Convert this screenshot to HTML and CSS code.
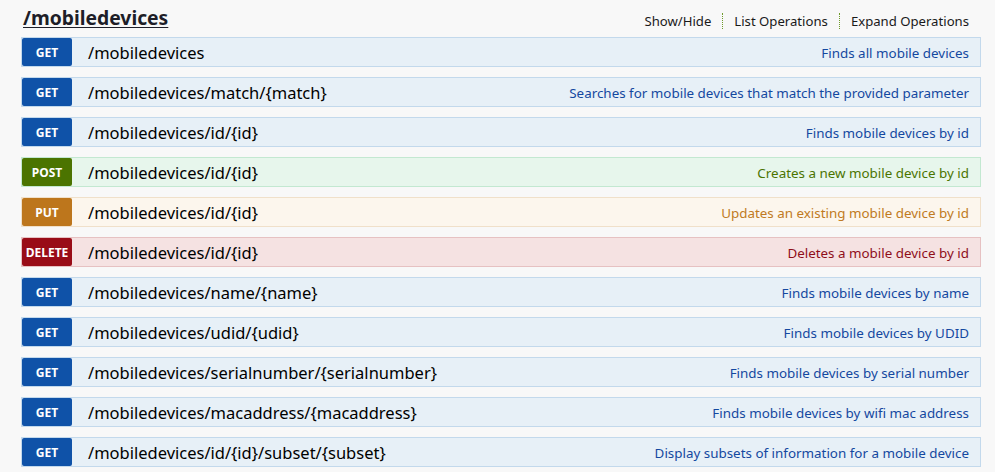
FILE: index.html
```html
<!DOCTYPE html>
<html>
<head>
<meta charset="utf-8">
<link rel="stylesheet" href="styles.css">
</head>
<body>
<div class="resource">
  <div class="heading">
    <h2 class="title"><a href="#">/mobiledevices</a></h2>
    <ul class="options">
      <li><a href="#">Show/Hide</a></li>
      <li><a href="#">List Operations</a></li>
      <li><a href="#">Expand Operations</a></li>
    </ul>
  </div>
  <ul class="ops">
    <li class="op get"><span class="method">GET</span><span class="path">/mobiledevices</span><span class="desc">Finds all mobile devices</span></li>
    <li class="op get"><span class="method">GET</span><span class="path">/mobiledevices/match/{match}</span><span class="desc">Searches for mobile devices that match the provided parameter</span></li>
    <li class="op get"><span class="method">GET</span><span class="path">/mobiledevices/id/{id}</span><span class="desc">Finds mobile devices by id</span></li>
    <li class="op post"><span class="method">POST</span><span class="path">/mobiledevices/id/{id}</span><span class="desc">Creates a new mobile device by id</span></li>
    <li class="op put"><span class="method">PUT</span><span class="path">/mobiledevices/id/{id}</span><span class="desc">Updates an existing mobile device by id</span></li>
    <li class="op delete"><span class="method">DELETE</span><span class="path">/mobiledevices/id/{id}</span><span class="desc">Deletes a mobile device by id</span></li>
    <li class="op get"><span class="method">GET</span><span class="path">/mobiledevices/name/{name}</span><span class="desc">Finds mobile devices by name</span></li>
    <li class="op get"><span class="method">GET</span><span class="path">/mobiledevices/udid/{udid}</span><span class="desc">Finds mobile devices by UDID</span></li>
    <li class="op get"><span class="method">GET</span><span class="path">/mobiledevices/serialnumber/{serialnumber}</span><span class="desc">Finds mobile devices by serial number</span></li>
    <li class="op get"><span class="method">GET</span><span class="path">/mobiledevices/macaddress/{macaddress}</span><span class="desc">Finds mobile devices by wifi mac address</span></li>
    <li class="op get"><span class="method">GET</span><span class="path">/mobiledevices/id/{id}/subset/{subset}</span><span class="desc">Display subsets of information for a mobile device</span></li>
  </ul>
</div>
</body>
</html>
```
FILE: styles.css
```css
html, body {
  margin: 0;
  padding: 0;
  background: #f8f8f8;
  font-family: "Noto Sans", "Open Sans", "DejaVu Sans", sans-serif;
  color: #000;
}
.resource {
  padding: 0 14px 0 21px;
}
.heading {
  display: flex;
  align-items: center;
  justify-content: space-between;
  height: 37px;
}
.title {
  margin: 0 0 0 2px;
  font-size: 19.3px;
  font-weight: bold;
  line-height: 24px;
  padding-bottom: 2px;
}
.title a {
  color: #1e1e28;
  text-decoration: underline;
  text-underline-offset: 2px;
}
.options {
  display: flex;
  list-style: none;
  margin: 0;
  padding: 4px 0 0 0;
}
.options li {
  padding: 0 11px;
  line-height: 16px;
  font-size: 13.15px;
}
.options li:last-child {
  padding-right: 12px;
}
.options li + li {
  border-left: 1px dotted #6f9a2a;
}
.options a {
  color: #1a1a1a;
  text-decoration: none;
}
.ops {
  list-style: none;
  margin: 0;
  padding: 0;
}
.op {
  display: flex;
  align-items: center;
  height: 28px;
  border: 1px solid;
  margin-bottom: 10px;
}
.method {
  box-sizing: border-box;
  width: 50px;
  height: 28px;
  padding-top: 1px;
  line-height: 27px;
  text-align: center;
  color: #fff;
  font-size: 12px;
  font-weight: bold;
  border-radius: 2px;
  flex-shrink: 0;
}
.path {
  margin-left: 16px;
  padding-top: 1px;
  font-size: 16.5px;
  color: #000;
}
.desc {
  margin-left: auto;
  padding-top: 1px;
  padding-right: 11px;
  font-size: 13.4px;
}
.get { background: #e7f0f7; border-color: #c3d9ec; }
.get .method { background: #0f52a8; }
.get .desc { color: #1448a0; }
.post { background: #e7f6ec; border-color: #c3e8d1; }
.post .method { background: #4b7400; }
.post .desc { color: #4b7400; }
.put { background: #fcf6ed; border-color: #f0e0ca; }
.put .method { background: #bd761c; }
.put .desc { color: #c07a22; }
.delete { background: #f5e2e2; border-color: #e6c1c2; }
.delete .method { background: #990c17; }
.delete .desc { color: #8f0f1a; }
```
